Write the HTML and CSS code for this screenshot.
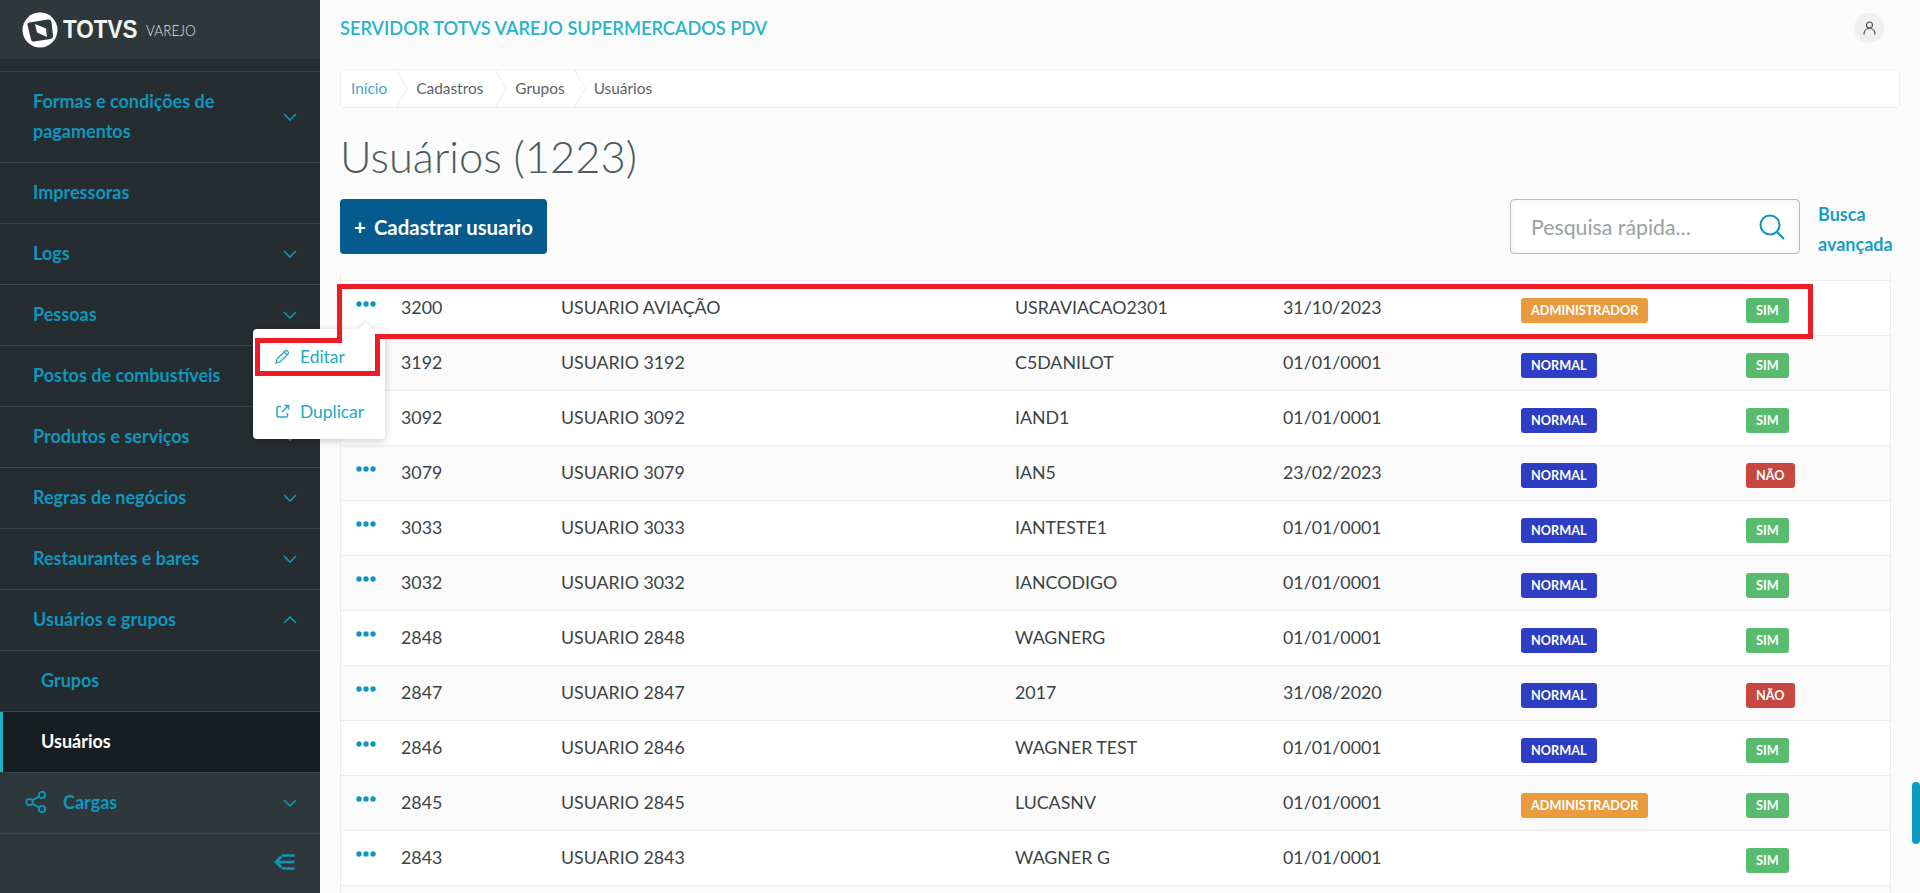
FILE: index.html
```html
<!DOCTYPE html>
<html lang="pt-BR">
<head>
<meta charset="utf-8">
<title>Usuários</title>
<link rel="stylesheet" href="styles.css">
</head>
<body>
<svg class="defs" width="0" height="0"><defs><symbol id="d" viewBox="0 0 20 6"><circle cx="3" cy="3" r="2.700"/><circle cx="10" cy="3" r="2.700"/><circle cx="17" cy="3" r="2.700"/></symbol></defs></svg>
<div class="app">
  <aside class="sidebar">
    <div class="brand">
      <svg class="brand-mark" width="36" height="36" viewBox="0 0 36 36"><circle cx="18" cy="18" r="17.500" fill="#fff"/><path d="M7.500 10.500 L26 7.500 Q29 7 29.500 10 L31 24 Q31 26.500 28.500 27 L12 29.500 Q9.500 30 9 27.500 L5.500 13 Q5 11 7.500 10.500 Z" fill="#2e3739"/><path d="M13 12 L24 16.500 L25 25 L15 20.500 Z" fill="#fff"/></svg>
      <span class="brand-name">TOTVS</span>
      <span class="brand-sub">VAREJO</span>
    </div>
    <nav class="menu">
      <a class="item"><span>Formas e condições de pagamentos</span><svg class="chev" viewBox="0 0 14 8"><path d="M1 1l6 6 6-6"/></svg></a>
      <a class="item"><span>Impressoras</span></a>
      <a class="item"><span>Logs</span><svg class="chev" viewBox="0 0 14 8"><path d="M1 1l6 6 6-6"/></svg></a>
      <a class="item"><span>Pessoas</span><svg class="chev" viewBox="0 0 14 8"><path d="M1 1l6 6 6-6"/></svg></a>
      <a class="item"><span>Postos de combustíveis</span><svg class="chev" viewBox="0 0 14 8"><path d="M1 1l6 6 6-6"/></svg></a>
      <a class="item"><span>Produtos e serviços</span><svg class="chev" viewBox="0 0 14 8"><path d="M1 1l6 6 6-6"/></svg></a>
      <a class="item"><span>Regras de negócios</span><svg class="chev" viewBox="0 0 14 8"><path d="M1 1l6 6 6-6"/></svg></a>
      <a class="item"><span>Restaurantes e bares</span><svg class="chev" viewBox="0 0 14 8"><path d="M1 1l6 6 6-6"/></svg></a>
      <a class="item"><span>Usuários e grupos</span><svg class="chev" viewBox="0 0 14 8"><path d="M1 7l6-6 6 6"/></svg></a>
      <a class="item sub"><span>Grupos</span></a>
      <a class="item sub active"><span>Usuários</span></a>
      <a class="item light"><svg class="share" viewBox="0 0 22 22"><circle cx="4.500" cy="11" r="3.200"/><circle cx="17" cy="4" r="3.200"/><circle cx="17" cy="18" r="3.200"/><path d="M7.300 9.400l6.900-3.900M7.300 12.600l6.900 3.900"/></svg><span class="cargas">Cargas</span><svg class="chev" viewBox="0 0 14 8"><path d="M1 1l6 6 6-6"/></svg></a>
    </nav>
    <div class="collapse">
      <svg width="21" height="16" viewBox="0 0 21 16"><path class="collapse-line" d="M8 1.500h12.500M2 8h18.500M8 14.500h12.500"/><path class="collapse-line" d="M7.500 2.500L2 8l5.500 5.500"/></svg>
    </div>
  </aside>

  <main class="main">
    <header class="topbar">
      <h2 class="server">SERVIDOR TOTVS VAREJO SUPERMERCADOS PDV</h2>
      <span class="avatar"><svg width="13" height="14" viewBox="0 0 13 14"><circle cx="6.500" cy="4" r="3"/><path d="M1 13.500c0-3.500 2-6 5.500-6s5.500 2.500 5.500 6"/></svg></span>
    </header>

    <ol class="crumbs">
      <li class="crumb first">Início</li><li class="sep"><svg width="12" height="39" viewBox="0 0 12 39"><path d="M0 0l11 19.500L0 39"/></svg></li>
      <li class="crumb">Cadastros</li><li class="sep"><svg width="12" height="39" viewBox="0 0 12 39"><path d="M0 0l11 19.500L0 39"/></svg></li>
      <li class="crumb short">Grupos</li><li class="sep"><svg width="12" height="39" viewBox="0 0 12 39"><path d="M0 0l11 19.500L0 39"/></svg></li>
      <li class="crumb">Usuários</li>
    </ol>

    <h1 class="title">Usuários (1223)</h1>

    <div class="toolbar">
      <button class="primary"><span class="plus">+</span>Cadastrar usuario</button>
      <div class="search-area">
        <div class="search">
          <span class="placeholder">Pesquisa rápida...</span>
          <svg width="26" height="26" viewBox="0 0 26 26"><circle cx="11" cy="11" r="9.500"/><path d="M18 18l7 7"/></svg>
        </div>
        <a class="advanced">Busca avançada</a>
      </div>
    </div>

    <div class="table">
      <div class="row"><svg class="dots"><use href="#d"/></svg><span>3200</span><span>USUARIO AVIAÇÃO</span><span>USRAVIACAO2301</span><span>31/10/2023</span><span><b class="badge orange">ADMINISTRADOR</b></span><span><b class="badge green">SIM</b></span></div>
      <div class="row"><svg class="dots"><use href="#d"/></svg><span>3192</span><span>USUARIO 3192</span><span>C5DANILOT</span><span>01/01/0001</span><span><b class="badge blue">NORMAL</b></span><span><b class="badge green">SIM</b></span></div>
      <div class="row"><svg class="dots"><use href="#d"/></svg><span>3092</span><span>USUARIO 3092</span><span>IAND1</span><span>01/01/0001</span><span><b class="badge blue">NORMAL</b></span><span><b class="badge green">SIM</b></span></div>
      <div class="row"><svg class="dots"><use href="#d"/></svg><span>3079</span><span>USUARIO 3079</span><span>IAN5</span><span>23/02/2023</span><span><b class="badge blue">NORMAL</b></span><span><b class="badge red">NÃO</b></span></div>
      <div class="row"><svg class="dots"><use href="#d"/></svg><span>3033</span><span>USUARIO 3033</span><span>IANTESTE1</span><span>01/01/0001</span><span><b class="badge blue">NORMAL</b></span><span><b class="badge green">SIM</b></span></div>
      <div class="row"><svg class="dots"><use href="#d"/></svg><span>3032</span><span>USUARIO 3032</span><span>IANCODIGO</span><span>01/01/0001</span><span><b class="badge blue">NORMAL</b></span><span><b class="badge green">SIM</b></span></div>
      <div class="row"><svg class="dots"><use href="#d"/></svg><span>2848</span><span>USUARIO 2848</span><span>WAGNERG</span><span>01/01/0001</span><span><b class="badge blue">NORMAL</b></span><span><b class="badge green">SIM</b></span></div>
      <div class="row"><svg class="dots"><use href="#d"/></svg><span>2847</span><span>USUARIO 2847</span><span>2017</span><span>31/08/2020</span><span><b class="badge blue">NORMAL</b></span><span><b class="badge red">NÃO</b></span></div>
      <div class="row"><svg class="dots"><use href="#d"/></svg><span>2846</span><span>USUARIO 2846</span><span>WAGNER TEST</span><span>01/01/0001</span><span><b class="badge blue">NORMAL</b></span><span><b class="badge green">SIM</b></span></div>
      <div class="row"><svg class="dots"><use href="#d"/></svg><span>2845</span><span>USUARIO 2845</span><span>LUCASNV</span><span>01/01/0001</span><span><b class="badge orange">ADMINISTRADOR</b></span><span><b class="badge green">SIM</b></span></div>
      <div class="row"><svg class="dots"><use href="#d"/></svg><span>2843</span><span>USUARIO 2843</span><span>WAGNER G</span><span>01/01/0001</span><span></span><span><b class="badge green">SIM</b></span></div>
      <div class="row"></div>
    </div>
  </main>
</div>

<div class="popup">
  <span class="popup-arrow"></span>
  <a class="popup-item"><svg width="15" height="15" viewBox="0 0 15 15"><path d="M1.200 13.800l.8-3.800 8-8q1-1 2.300 0l.7.700q1 1.300 0 2.300l-8 8zM9 3l3 3"/></svg>Editar</a>
  <a class="popup-item"><svg width="15" height="15" viewBox="0 0 15 15"><path d="M6 2.500H3.500q-1.500 0-1.500 1.500v7.500q0 1.500 1.500 1.500H11q1.500 0 1.500-1.500V9M7 8L13.500 1.500M9.500 1.500H13.500V5.500" stroke-width="1.500"/></svg>Duplicar</a>
</div>

<svg class="annotation" width="1920" height="893" viewBox="0 0 1920 893"><path d="M339.500 286.500H1810.500V336.500H377.500V373.500H257.500V340.500H339.500Z"/></svg>
<span class="scroll-thumb"></span>
</body>
</html>
```

FILE: styles.css
```css
* { box-sizing: border-box; }
html, body { margin: 0; height: 100%; overflow: hidden; }
body { font-family: Lato, "Noto Sans", sans-serif; color: #3c4346; background: #fbfbfb; }
.defs { position: absolute; }

.app { display: flex; height: 893px; overflow: hidden; }

.sidebar { width: 320px; flex: none; display: flex; flex-direction: column; background: #252d30; }
.brand { height: 59px; flex: none; display: flex; align-items: center; background: #2e3739; padding-left: 22px; }
.brand-mark { flex: none; }
.brand-name { margin-left: 5px; width: 76px; font: 700 25px/1 "Liberation Sans", sans-serif; color: #f1f3f3; transform: scaleX(.9); transform-origin: left; }
.brand-sub { margin-left: 7px; font: 300 16px/1 Lato, sans-serif; color: #dfe3e3; transform: scaleX(.85); transform-origin: left; }

.menu { flex: none; padding-top: 12px; display: flex; flex-direction: column; }
.item { display: flex; align-items: center; justify-content: space-between; min-height: 61px; padding: 14px 23px 16px 33px; border-top: 1px solid #38474a; font-weight: 700; font-size: 18px; line-height: 30px; color: #0f96bf; }
.item > span { max-width: 230px; }
.item.sub { padding-left: 41px; background: #212a2c; }
.item.sub.active { background: #171d20; color: #fff; box-shadow: inset 3px 0 0 #1fb0c4; }
.item.light { background: #2e3739; padding-left: 25px; justify-content: flex-start; }
.cargas { margin-left: 16px; }
.chev { width: 14px; height: 8px; flex: none; fill: none; stroke: #0f96bf; stroke-width: 1.600; position: relative; top: 1px; }
.item.light .chev { margin-left: auto; }
.share { width: 22px; height: 22px; fill: none; stroke: #0f96bf; stroke-width: 1.800; flex: none; }
.collapse { flex: 1; background: #2e3739; border-top: 1px solid #38474a; display: flex; justify-content: flex-end; align-items: flex-start; padding: 20px 25px 0 0; }
.collapse-line { fill: none; stroke: #0f96bf; stroke-width: 2.600; }

.main { flex: 1; min-width: 0; padding: 0 20px; }
.topbar { height: 59px; display: flex; align-items: center; justify-content: space-between; padding-right: 16px; margin-top: -2px; }
.server { margin: 0; font-size: 18.200px; font-weight: 600; color: #2bb3c9; }
.avatar { width: 30px; height: 30px; border-radius: 50%; background: #f0f0f0; display: flex; align-items: center; justify-content: center; }
.avatar svg { fill: none; stroke: #4a5256; stroke-width: 1.200; }

.crumbs { list-style: none; margin: 12px 0 0; padding: 0 0 0 10px; height: 39px; background: #fff; border: 1px solid #eee; border-radius: 4px; display: flex; align-items: center; font-size: 15.400px; color: #5a6366; }
.crumb { padding: 0 12px 0 8px; line-height: 37px; }
.crumb.first { padding-left: 0; color: #4aa6c8; padding-right: 9px; }
.crumb.short { padding-right: 9px; }
.sep { height: 37px; overflow: hidden; }
.sep svg { display: block; margin-top: -1px; fill: none; stroke: #ececec; }

.title { margin: 18px 0 0; height: 66px; font-size: 43.500px; line-height: 61px; font-weight: 300; color: #4f5a5e; }
.toolbar { margin-top: 7px; height: 55px; display: flex; justify-content: space-between; align-items: flex-start; }
.primary { height: 55px; width: 207px; border: 0; border-radius: 4px; background: #055a8e; color: #fff; font: 700 20.400px Lato, sans-serif; display: flex; align-items: center; justify-content: center; white-space: nowrap; padding: 0; }
.plus { margin-right: 8px; font-weight: 700; }
.search-area { display: flex; gap: 18px; }
.search { width: 290px; height: 55px; border: 1px solid #bbb; border-radius: 4px; background: #fff; box-shadow: inset 0 0 6px rgba(0,0,0,.07); display: flex; align-items: center; justify-content: space-between; padding: 0 14px 0 20px; font-size: 21.300px; color: #9aa1a5; }
.search svg { fill: none; stroke: #0f96bf; stroke-width: 2; flex: none; }
.advanced { width: 82px; font-size: 18px; line-height: 30px; font-weight: 700; color: #1c9dc2; }

.table { width: 1551px; margin-top: 20px; padding-top: 6px; border-left: 1px solid #ececec; border-right: 1px solid #ececec; }
.row { height: 55px; display: grid; grid-template-columns: 46px 160px 454px 268px 238px 225px 1fr; padding-left: 14px; border-top: 1px solid #ececec; font-size: 17.800px; line-height: 53px; background: #fff; align-items: start; }
.row:nth-child(even) { background: #fafafa; }
.dots { width: 20px; height: 6px; margin: 20px 0 0 1px; fill: #0f96bf; }
.badge { display: inline-block; height: 25px; margin-top: 17px; padding: 0 10px; border-radius: 3px; font-size: 12.700px; font-weight: 700; line-height: 24px; color: #fff; vertical-align: top; }
.orange { background: #ea9b3e; }
.green { background: #59bb6e; }
.blue { background: #2d3ec5; }
.red { background: #c8473f; }

.popup { position: absolute; left: 253px; top: 329px; width: 132px; height: 110px; background: #fff; border-radius: 4px; box-shadow: 0 2px 8px rgba(0,0,0,.2); }
.popup-arrow { position: absolute; left: 107px; top: -5px; width: 11px; height: 11px; background: #fff; transform: rotate(45deg); box-shadow: -1px -1px 2px rgba(0,0,0,.08); }
.popup-item { position: relative; display: flex; align-items: center; gap: 10px; height: 55px; padding-left: 22px; font-size: 17.400px; color: #25a7c7; }
.popup-item svg { fill: none; stroke: #25a7c7; stroke-width: 1.300; flex: none; }

.annotation { position: absolute; left: 0; top: 0; pointer-events: none; }
.annotation path { fill: none; stroke: #ee1c25; stroke-width: 5; }
.scroll-thumb { position: absolute; left: 1912px; top: 782px; width: 8px; height: 62px; border-radius: 4px; background: #0c9abe; }
```
